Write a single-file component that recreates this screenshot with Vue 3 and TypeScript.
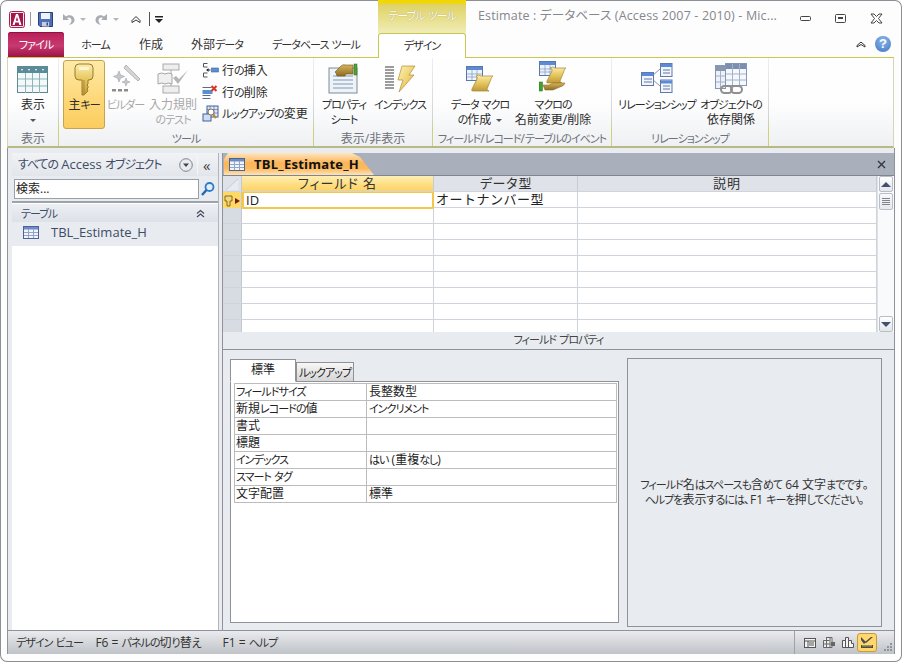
<script setup lang="ts">
import { h, type FunctionalComponent } from 'vue'

const KANA = /[\u3040-\u309f\u30a0-\u30ff]+|[^\u3040-\u309f\u30a0-\u30ff]+/g
const K: FunctionalComponent<{ t: string }> = (props) =>
  h(
    'span',
    (props.t.match(KANA) ?? []).map((run) =>
      /^[\u3040-\u309f\u30a0-\u30ff]/.test(run) ? h('span', { class: 'k' }, run) : run,
    ),
  )
K.props = ['t']

const tabs = [
  { label: 'ホーム', w: 63 },
  { label: '作成', w: 48 },
  { label: '外部データ', w: 84 },
  { label: 'データベース ツール', w: 114 },
]
const blankRows = [1, 2, 3, 4, 5, 6, 7]
const props = [
  ['フィールドサイズ', '長整数型'],
  ['新規レコードの値', 'インクリメント'],
  ['書式', ''],
  ['標題', ''],
  ['インデックス', 'はい (重複なし)'],
  ['スマート タグ', ''],
  ['文字配置', '標準'],
]
</script>

<template>
  <div class="window">
    <svg class="defs" aria-hidden="true">
      <defs>
        <linearGradient id="gold" x1="0" y1="0" x2="0" y2="1">
          <stop offset="0" stop-color="#fbeeb0" />
          <stop offset="0.5" stop-color="#e6c65e" />
          <stop offset="1" stop-color="#c09a38" />
        </linearGradient>
        <linearGradient id="bolt" x1="0" y1="0" x2="1" y2="1">
          <stop offset="0" stop-color="#fff3b0" />
          <stop offset="1" stop-color="#dcb23e" />
        </linearGradient>
        <linearGradient id="hand" x1="0" y1="0" x2="0" y2="1">
          <stop offset="0" stop-color="#d8b45a" />
          <stop offset="1" stop-color="#8e6c24" />
        </linearGradient>
      </defs>
    </svg>

    <header class="head">
      <div class="head-left">
        <div class="qat">
          <svg class="q-a" width="16" height="17" viewBox="0 0 16 17"><rect x=".5" y=".5" width="15" height="16" rx="2" fill="#fbe8ee" stroke="#a5224f" /><rect x="2" y="2" width="12" height="13" fill="#a5174c" /><path d="M3.5 14 7 3h2l3.500 11h-2.200l-.7-2.500H6.300L5.600 14zM6.800 9.800h2.400L8 5.800z" fill="#fff" /></svg>
          <i class="q-sep q-sep1"></i>
          <svg class="q-save" width="15" height="15" viewBox="0 0 15 15"><path d="M.5.500h14v14H2L.5 13z" fill="#4f6fb8" stroke="#2c3f7c" /><rect x="3" y="1" width="9" height="6" fill="#eef3fb" /><rect x="4" y="10" width="7" height="4.500" fill="#c8cedd" /><rect x="8.500" y="10.500" width="1.500" height="3" fill="#3a4a7a" /></svg>
          <svg class="q-undo" width="13" height="13" viewBox="0 0 13 13"><path d="M1 1v6h6L5 5c2-1.500 4.500 0 4.500 2.500 0 1.800-1 3-2.500 4.500 3.500-.5 5.500-2.500 5.500-5 0-4-5-6.500-8.500-3.500z" fill="#a9acb1" /></svg>
          <i class="q-arrow q-arrow1"></i>
          <svg class="q-redo" width="13" height="13" viewBox="0 0 13 13"><path d="M12 1v6H6l2-2C6 3.500 3.500 5 3.500 7.500c0 1.800 1 3 2.500 4.500C2.500 11.500.5 9.500.5 7c0-4 5-6.500 8.500-3.500z" fill="#a9acb1" /></svg>
          <i class="q-arrow q-arrow2"></i>
          <svg class="q-home" width="10" height="9" viewBox="0 0 10 9"><path d="M1 7.500 1 5.500 5 1.500 9 5.500 9 7.500 5 5z" fill="none" stroke="#333" /></svg>
          <i class="q-sep q-sep2"></i>
          <svg class="q-more" width="8" height="7" viewBox="0 0 8 7"><rect width="8" height="1.500" fill="#222" /><path d="M0 3h8L4 7z" fill="#222" /></svg>
        </div>
        <nav class="tabs">
          <div class="file-tab"><K t="ファイル" /></div>
          <div v-for="t in tabs" :key="t.label" class="tab" :style="{ width: t.w + 'px' }"><K :t="t.label" /></div>
        </nav>
      </div>
      <div class="ctx">
        <div class="ctx-top"><K t="テーブル ツール" /></div>
        <div class="ctx-tab"><K t="デザイン" /></div>
      </div>
      <div class="head-right">
        <div class="title-row">
          <span class="title">Estimate : データベース (Access 2007 - 2010)  -  Mic...</span>
          <div class="win-btns">
            <svg width="12" height="6" viewBox="0 0 12 6"><rect x=".5" y=".5" width="10" height="4" rx="1" fill="none" stroke="#444" /></svg>
            <svg width="12" height="10" viewBox="0 0 12 10"><rect x=".5" y=".5" width="10" height="8" rx="1" fill="none" stroke="#444" /><rect x="3" y="3" width="5" height="2" fill="#444" /></svg>
            <svg width="13" height="11" viewBox="0 0 13 11"><path d="M1 1h3l2.500 2.500L9 1h3L8.500 5.500 12 10H9L6.500 7.500 4 10H1L4.500 5.500z" fill="#fff" stroke="#444" /></svg>
          </div>
        </div>
        <div class="help-row">
          <svg width="10" height="7" viewBox="0 0 10 7"><path d="M1 6V4.500L5 1l4 3.500V6L5 3.500z" fill="none" stroke="#333" /></svg>
          <span class="help">?</span>
        </div>
      </div>
    </header>

    <section class="ribbon">
      <div class="group g1">
        <div class="g-body">
          <div class="big big-view">
            <div class="icon">
              <svg width="32" height="30" viewBox="0 0 32 30"><rect x=".5" y=".5" width="30" height="26" fill="#f3f8f8" stroke="#5e8a96" /><rect x="1" y="1" width="29" height="6" fill="#5a8c98" /><path d="M1 13h29M1 20h29M8.500 7v20M15.500 7v20M22.500 7v20" stroke="#8fb3bb" /><path d="M4 3h2l-1 2zM11 3h2l-1 2zM18 3h2l-1 2zM25 3h2l-1 2z" fill="#fff" /></svg>
            </div>
            <span>表示</span>
            <i class="tiny-arrow"></i>
          </div>
        </div>
        <div class="g-label">表示</div>
      </div>

      <div class="group g2">
        <div class="g-body">
          <div class="big big-key">
            <div class="icon">
              <svg width="20" height="34" viewBox="0 0 20 34"><path d="M5 1h10q4 0 4 4v8q0 4-4 4h-1v4l-1 1 1 1v2l-1 1 1 2-4 4H8V17H5q-4 0-4-4V5q0-4 4-4z" fill="url(#gold)" stroke="#9c7a2a" /><rect x="5" y="4" width="10" height="3" rx="1" fill="#fff6cc" /><path d="M10 17v15" stroke="#a9873a" /></svg>
            </div>
            <K t="主キー" />
          </div>
          <div class="big big-builder off">
            <div class="icon">
              <svg width="30" height="32" viewBox="0 0 30 32"><path d="M15 2l2 2 12 12-2 2L13 5z" fill="#d5d5d5" stroke="#b5b5b5" /><path d="M8 8l1.500 4 4 1.500-4 1.500L8 19l-1.500-4-4-1.500 4-1.500zM15 15l1 3 3 1-3 1-1 3-1-3-3-1 3-1z" fill="#c4c8cc" stroke="#9fa3a8" stroke-width=".6" /><path d="M1 26h4v2.500H1zM7 26h4v2.500H7zM13 26h4v2.500h-4z" fill="#8d8d8d" /></svg>
            </div>
            <K t="ビルダー" />
          </div>
          <div class="big big-rule off">
            <div class="icon">
              <svg width="32" height="32" viewBox="0 0 32 32"><rect x="6" y="1" width="16" height="6" fill="#eee" stroke="#aaa" /><rect x="6" y="23" width="16" height="7" fill="#eee" stroke="#aaa" /><path d="M14 7v16" stroke="#aaa" /><path d="M1 11q4-2 7 0 3-2 7 0v10q-4-2-7 0-3-2-7 0z" fill="#f0f0f0" stroke="#a5a5a5" /><path d="M16 15l5 6L31 7l-9 9-3-3z" fill="#b5b5b5" /></svg>
            </div>
            <span>入力規則</span>
            <K t="のテスト" />
          </div>
          <div class="small-list">
            <div class="small">
              <svg width="16" height="15" viewBox="0 0 16 15"><path d="M5 .5H1v3.500h4M5 10H1v4h4" fill="none" stroke="#555" /><path d="M4 7h4" stroke="#222" /><path d="M4 7l2-2v4z" fill="#222" /><rect x="9" y="5" width="7" height="4" fill="#5b8fd0" stroke="#3a66a5" stroke-width=".6" /></svg>
              <K t="行の挿入" />
            </div>
            <div class="small">
              <svg width="16" height="15" viewBox="0 0 16 15"><path d="M0 2.500h9M0 13.500h8M8 10.500H0" fill="none" stroke="#5a6d8e" /><rect y="5" width="10" height="4" fill="#5b8fd0" /><path d="M9 1l5 5m0-5L9 6" stroke="#d8361e" stroke-width="2" /></svg>
              <K t="行の削除" />
            </div>
            <div class="small">
              <svg width="17" height="17" viewBox="0 0 17 17"><rect x="5" y="1" width="11" height="11" fill="#dfe8f6" stroke="#44609a" /><path d="M8 1v11M12 1v11M5 4.500h11M5 8h11" stroke="#44609a" stroke-width=".6" /><rect x="1" y="9" width="8" height="7" fill="#cfdcf2" stroke="#44609a" /><circle cx="9" cy="7" r="3" fill="#fff" stroke="#87775a" /><path d="M11 9.500l3 3.500" stroke="#c08a30" stroke-width="2" /></svg>
              <K t="ルックアップの変更" />
            </div>
          </div>
        </div>
        <div class="g-label"><K t="ツール" /></div>
      </div>

      <div class="group g3">
        <div class="g-body">
          <div class="big big-prop">
            <div class="icon">
              <svg width="32" height="32" viewBox="0 0 32 32"><rect x="1" y="5" width="28" height="25" fill="#eef3f8" stroke="#7b8a9a" /><path d="M5 13h20M5 17h20M5 21h20M5 25h20" stroke="#7e99b8" /><path d="M7 9l6-6q2-2 5-1h7v9h-7l-1 2H9l-1-3z" fill="url(#hand)" stroke="#6e5518" stroke-width=".6" /><rect x="26" y="1" width="3" height="11" fill="#4da335" stroke="#2c6d20" stroke-width=".5" /></svg>
            </div>
            <K t="プロパティ" />
            <K t="シート" />
          </div>
          <div class="big big-index">
            <div class="icon">
              <svg width="32" height="28" viewBox="0 0 32 28"><path d="M1 2h9M1 5h9M1 8h9M1 11h9M1 14h9M1 17h9M1 20h9M1 23h9" stroke="#7c7c7c" stroke-width="1.600" /><path d="M18 1h13l-6 9h5L15 27l4-12h-5z" fill="url(#bolt)" stroke="#b18e33" stroke-width=".7" /></svg>
            </div>
            <K t="インデックス" />
          </div>
        </div>
        <div class="g-label"><K t="表示/非表示" /></div>
      </div>

      <div class="group g4">
        <div class="g-body">
          <div class="big big-macro1">
            <div class="icon">
              <svg width="28" height="28" viewBox="0 0 28 28"><rect x=".5" y=".5" width="16" height="14" fill="#eef3fb" stroke="#5a78a8" /><rect x="1" y="1" width="15" height="3" fill="#5a8ad8" /><path d="M6 4v10M11 4v10M1 8h15M1 11h15" stroke="#7e99bf" stroke-width=".7" /><path d="M10 10q3-2 5 0h12q-2 1-2 3l-4 10q0 2 2 2H7q-2 0-1-2l5-10q1-2-1-3z" fill="url(#gold)" stroke="#a48433" stroke-width=".7" /></svg>
            </div>
            <K t="データ マクロ" />
            <span><K t="の作成 " /><i class="inline-arrow"></i></span>
          </div>
          <div class="big big-macro2">
            <div class="icon icon-up">
              <svg width="28" height="32" viewBox="0 0 28 32"><rect x=".5" y=".5" width="16" height="14" fill="#eef3fb" stroke="#5a78a8" /><rect x="1" y="1" width="15" height="3" fill="#5a8ad8" /><path d="M6 4v10M11 4v10M1 8h15M1 11h15" stroke="#7e99bf" stroke-width=".7" /><path d="M11 7q3-2 5 0h11q-2 1-2 3l-4 10q0 2 2 2H9q-2 0-1-2l5-10q1-2-2-3z" fill="url(#gold)" stroke="#a48433" stroke-width=".7" /><path d="M4 24h6l4-2h12q-1 3-5 4l-7 3H6z" fill="url(#hand)" stroke="#7b6020" stroke-width=".5" /><rect x="0" y="21" width="3.500" height="9" fill="#3fa12f" stroke="#26701c" stroke-width=".5" /></svg>
            </div>
            <K t="マクロの" />
            <span>名前変更/削除</span>
          </div>
        </div>
        <div class="g-label"><K t="フィールド/レコード/テーブルのイベント" /></div>
      </div>

      <div class="group g5">
        <div class="g-body">
          <div class="big big-rel">
            <div class="icon">
              <svg width="32" height="30" viewBox="0 0 32 30"><path d="M11 13l8-7M11 16l8 7" stroke="#8a97ad" /><g fill="#f2f5fb" stroke="#6079ab"><rect x=".5" y="9.500" width="12" height="13" /><rect x="19.500" y=".5" width="11.500" height="13" /><rect x="19.500" y="17" width="11.500" height="12.500" /></g><g fill="#5a8ad8"><rect x="1" y="10" width="11" height="3" /><rect x="20" y="1" width="11" height="3" /><rect x="20" y="17.500" width="11" height="3" /></g><path d="M3 16h8M3 19h8M22 7h7M22 10h7M22 23h7M22 26h7" stroke="#6079ab" /></svg>
            </div>
            <K t="リレーションシップ" />
          </div>
          <div class="big big-dep">
            <div class="icon">
              <svg width="32" height="32" viewBox="0 0 32 32"><rect x=".5" y="2.500" width="10" height="23" fill="#edf1f8" stroke="#8596b3" /><rect x="1" y="3" width="9" height="5" fill="#8a97b0" /><rect x="10.500" y=".5" width="21" height="22" fill="#f5f8fd" stroke="#8596b3" /><rect x="11" y="1" width="20" height="5" fill="#7d8fb0" /><path d="M17.500 1v21M24.500 1v21M11 11h20M11 17h20M1 13h9M1 19h9M5.500 8v17" stroke="#a4b1c9" /><rect x="6" y="23" width="11" height="7" rx="3.500" fill="none" stroke="#8f8f8f" stroke-width="2" /><rect x="16" y="23" width="11" height="7" rx="3.500" fill="none" stroke="#8f8f8f" stroke-width="2" /></svg>
            </div>
            <K t="オブジェクトの" />
            <span>依存関係</span>
          </div>
        </div>
        <div class="g-label"><K t="リレーションシップ" /></div>
      </div>
    </section>

    <main class="body">
      <aside class="nav">
        <div class="nav-head">
          <span class="nav-title"><K t="すべての Access オブジェクト" /></span>
          <svg class="nav-drop" width="14" height="14" viewBox="0 0 14 14"><circle cx="7" cy="7" r="6.300" fill="#e9ebef" stroke="#7c8490" /><path d="M4 5.500h6L7 9z" fill="#3d4450" /></svg>
          <span class="nav-collapse">«</span>
        </div>
        <div class="search">
          <div class="search-box">検索...</div>
          <svg width="16" height="16" viewBox="0 0 16 16"><circle cx="9.500" cy="6" r="4" fill="#dfeefa" stroke="#2f7bc4" stroke-width="1.800" /><path d="M6.500 9 2 14" stroke="#2468ad" stroke-width="2.400" /></svg>
        </div>
        <div class="nav-group">
          <K t="テーブル" />
          <svg width="9" height="9" viewBox="0 0 9 9"><path d="M1 4.500 4.500 1.500 8 4.500M1 8 4.500 5 8 8" fill="none" stroke="#404a5c" stroke-width="1.200" /></svg>
        </div>
        <div class="nav-item">
          <svg width="16" height="13" viewBox="0 0 16 13"><rect x=".5" y=".5" width="15" height="12" fill="#f1f5fb" stroke="#4d6490" /><rect x="1" y="1" width="14" height="2.500" fill="#6d8bc4" /><path d="M5.500 3v9M10.500 3v9M1 6.500h14M1 9.500h14" stroke="#90a5c9" /></svg>
          <span>TBL_Estimate_H</span>
        </div>
      </aside>
      <div class="splitter"></div>
      <div class="main">
        <div class="doc-bar">
          <div class="doc-tab">
            <svg width="16" height="13" viewBox="0 0 16 13"><rect x=".5" y=".5" width="15" height="12" fill="#f1f5fb" stroke="#4d6490" /><rect x="1" y="1" width="14" height="2.500" fill="#6d8bc4" /><path d="M5.500 3v9M10.500 3v9M1 6.500h14M1 9.500h14" stroke="#90a5c9" /></svg>
            <span>TBL_Estimate_H</span>
          </div>
          <svg class="doc-x" width="9" height="9" viewBox="0 0 9 9"><path d="M1 1l7 7M8 1 1 8" stroke="#33383f" stroke-width="1.400" /></svg>
        </div>
        <div class="design">
          <div class="grid">
            <div class="row head-row">
              <div class="sel corner"><svg width="18" height="15" viewBox="0 0 18 15"><path d="M3 14 15 3v11z" fill="#e8ebf0" /><path d="M3 14 15 3" stroke="#c6ccd5" /></svg></div>
              <div class="hc active">フィールド 名</div>
              <div class="hc hc-type">データ型</div>
              <div class="hc">説明</div>
            </div>
            <div class="row">
              <div class="sel current">
                <svg width="9" height="12" viewBox="0 0 9 12"><path d="M1 1h7v5H6v5H3V6H1z" fill="#f4d67a" stroke="#86661d" /></svg>
                <i class="row-arrow"></i>
              </div>
              <div class="c field-on">ID</div>
              <div class="c c-type">オートナンバー型</div>
              <div class="c"></div>
            </div>
            <div v-for="r in blankRows" :key="r" class="row">
              <div class="sel"></div>
              <div class="c"></div>
              <div class="c"></div>
              <div class="c"></div>
            </div>
            <div class="row row-last">
              <div class="sel"></div>
              <div class="c"></div>
              <div class="c"></div>
              <div class="c"></div>
            </div>
          </div>
          <div class="vscroll">
            <div class="sb-btn"><i class="tri-up"></i></div>
            <div class="sb-thumb"><i></i><i></i><i></i><i></i></div>
            <div class="sb-track"></div>
            <div class="sb-btn"><i class="tri-down"></i></div>
          </div>
        </div>
        <div class="prop-title"><K t="フィールド プロパティ" /></div>
        <div class="prop">
          <div class="prop-left">
            <div class="prop-tabs">
              <div class="ptab on">標準</div>
              <div class="ptab"><K t="ルックアップ" /></div>
            </div>
            <div class="prop-box">
              <table class="prop-table">
                <tbody>
                  <tr v-for="p in props" :key="p[0]">
                    <td class="p-name"><K :t="p[0]" /></td>
                    <td><K :t="p[1]" /></td>
                  </tr>
                </tbody>
              </table>
            </div>
          </div>
          <div class="prop-help">
            <p><K t="フィールド名はスペースも含めて 64 文字までです。" /></p>
            <p><K t="ヘルプを表示するには、F1 キーを押してください。" /></p>
          </div>
        </div>
      </div>
    </main>

    <footer class="status">
      <K class="st-text" t="デザイン ビュー    F6 = パネルの切り替え       F1 = ヘルプ" />
      <div class="st-views">
        <svg width="12" height="10" viewBox="0 0 12 10"><rect x=".5" y=".5" width="11" height="9" fill="#f4f4f4" stroke="#555" /><path d="M1 3h10M4 3v6M5 5h5M5 7h5" stroke="#555" /></svg>
        <svg width="12" height="11" viewBox="0 0 12 11"><path d="M.5 3.500h6M.5 7h7M3.500.5v10M7 .5v10M3 .5h6v10H.5V3.500" fill="#eee" stroke="#666" /><rect x="8" y="5" width="4" height="4" fill="#666" /></svg>
        <svg width="12" height="11" viewBox="0 0 12 11"><path d="M.5 10.500v-7h3v-3h3v3h3v3h2v4z" fill="#f4f4f4" stroke="#555" /><path d="M6.500 3.500v7M3.500 3.500v7" stroke="#555" /></svg>
        <div class="st-active">
          <svg width="14" height="13" viewBox="0 0 14 13"><path d="M1 1l5 5-2 2L1 4zM13 1 6 7l-1-1 6-5z" fill="#4d4d4d" /><rect x="1" y="9" width="12" height="3" fill="#4d4d4d" /><path d="M3 9v1.500M5 9v1.500M7 9v1.500M9 9v1.500M11 9v1.500" stroke="#ffd76b" /></svg>
        </div>
      </div>
      <svg class="grip" width="10" height="10" viewBox="0 0 10 10"><path d="M7 1h2v2H7zM4 4h2v2H4zM7 4h2v2H7zM1 7h2v2H1zM4 7h2v2H4zM7 7h2v2H7z" fill="#8f949a" /></svg>
    </footer>
    <div class="frame-bottom"></div>
  </div>
</template>

<style>
html, body { margin: 0; background: #fff; }
.k { font-size: .92em; letter-spacing: -.09em; }
</style>

<style scoped>
.window {
  width: 902px;
  height: 662px;
  display: flex;
  flex-direction: column;
  background: #fdfdfd;
  border-radius: 7px;
  box-shadow: inset 0 0 0 1px #8b8f96;
  font: 12px/15px "Open Sans", "Noto Sans CJK JP", sans-serif;
  font-feature-settings: "palt";
  color: #2b2b2b;
  overflow: hidden;
}
.defs { width: 0; height: 0; display: block; }
.head { display: flex; height: 58px; margin: 0 8px 0 7px; flex: none; }
.head-left { width: 371px; border-bottom: 1px solid #c9c84e; box-sizing: border-box; }
.qat { height: 31px; display: flex; align-items: center; padding-top: 7px; box-sizing: border-box; }
.qat > * { flex: none; }
.q-a { margin-left: 2px; }
.q-sep { width: 1px; height: 14px; background: #9a9a9a; }
.q-sep1 { margin-left: 5px; }
.q-save { margin-left: 7px; }
.q-undo { margin-left: 9px; }
.q-arrow { width: 0; height: 0; border: 3px solid transparent; border-top: 3px solid #b5b5b5; border-bottom: 0; }
.q-arrow1 { margin-left: 5px; }
.q-redo { margin-left: 9px; }
.q-arrow2 { margin-left: 5px; }
.q-home { margin-left: 12px; }
.q-sep2 { margin-left: 8px; background: #555; }
.q-more { margin-left: 5px; }
.tabs { display: flex; height: 26px; align-items: flex-end; }
.file-tab {
  margin-left: 1px;
  width: 56px;
  height: 25px;
  border-radius: 3px 3px 0 0;
  background: linear-gradient(#b91e57, #c63a71 55%, #9e1146);
  box-shadow: inset 0 1px 0 #8f1240;
  color: #fff;
  text-align: center;
  line-height: 25px;
}
.tab { height: 25px; line-height: 26px; text-align: center; color: #333; white-space: pre; flex: none; }
.ctx { width: 88px; flex: none; display: flex; flex-direction: column; }
.ctx-top {
  height: 33px;
  box-sizing: border-box;
  padding-top: 8px;
  text-align: center;
  color: #fff;
  background: linear-gradient(#f3d700 0, #f3d700 3px, #dfd263 4px, #f0ecb6 100%);
  text-shadow: 0 0 1px #8f8434;
}
.ctx-tab {
  height: 25px;
  box-sizing: border-box;
  border: 1px solid #c9c84e;
  border-bottom: 0;
  border-radius: 3px 3px 0 0;
  background: #fff;
  text-align: center;
  line-height: 24px;
}
.head-right { flex: 1; border-bottom: 1px solid #c9c84e; box-sizing: border-box; display: flex; flex-direction: column; }
.title-row { display: flex; height: 32px; align-items: center; }
.title { margin-left: 12px; color: #85878c; font-size: 12.500px; white-space: pre; margin-top: -1px; letter-spacing: .15px; }
.win-btns { margin-left: auto; margin-right: 11px; display: flex; align-items: center; gap: 23px; margin-top: 5px; }
.help-row { display: flex; justify-content: flex-end; align-items: center; gap: 9px; padding-right: 3px; height: 24px; }
.help {
  width: 16px;
  height: 16px;
  border-radius: 50%;
  background: radial-gradient(circle at 50% 30%, #8ab6ea, #3f76c4);
  color: #fff;
  font: bold 13px/16px "Liberation Sans", sans-serif;
  text-align: center;
}
.ribbon {
  display: flex;
  height: 90px;
  flex: none;
  margin: 0 8px 0 7px;
  box-sizing: border-box;
  border-left: 1px solid #d5d6b8;
  border-right: 1px solid #d5d6b8;
  border-bottom: 2px solid #b9b984;
  background: linear-gradient(#fefefe 50%, #eef0f3);
}
.group {
  display: flex;
  flex-direction: column;
  box-sizing: border-box;
  border-right: 1px solid;
  border-image: linear-gradient(#f0f0f0, #d0d3d8 65%, #cfcf80 80%) 1;
}
.g1 { width: 51px; }
.g2 { width: 255px; }
.g3 { width: 119px; }
.g4 { width: 179px; }
.g5 { width: 157px; }
.g-body { flex: 1; display: flex; padding-top: 2px; min-height: 0; }
.g-label { height: 17px; text-align: center; color: #6d7178; line-height: 19px; white-space: nowrap; overflow: hidden; flex: none; }
.big { display: flex; flex-direction: column; align-items: center; box-sizing: border-box; height: 69px; white-space: pre; flex: none; }
.icon { height: 37px; flex: none; padding-top: 3px; box-sizing: border-box; display: flex; justify-content: center; align-items: flex-start; }
.icon svg { display: block; }
.icon-up svg { margin-top: -2px; }
.off { color: #a8a8a8; }
.big-view { width: 50px; }
.big-view .icon { padding-top: 6px; }
.tiny-arrow { margin-top: 7px; width: 0; height: 0; border: 3px solid transparent; border-top: 3px solid #555; border-bottom: 0; }
.g2 .g-body { padding-left: 4px; }
.big-key {
  width: 42px;
  border: 1px solid #c8a24d;
  border-radius: 3px;
  background: linear-gradient(#fdeaa8, #fdd776 60%, #fbcd5f);
}
.big-key .icon { padding-top: 2px; height: 36px; }
.big-builder { width: 41px; }
.big-rule { width: 54px; }
.small-list { margin-left: 2px; display: flex; flex-direction: column; }
.small { display: flex; align-items: center; height: 21.500px; gap: 3px; white-space: nowrap; }
.small svg { width: 17px; flex: none; }
.g3 .g-body { padding-left: 4px; }
.big-prop { width: 52px; }
.big-index { width: 56px; margin-left: 2px; }
.big-index .icon { padding-top: 5px; }
.g4 .g-body { padding-left: 13px; }
.big-macro1 { width: 68px; }
.big-macro1 .icon { padding-top: 6px; }
.big-macro2 { width: 78px; }
.inline-arrow { display: inline-block; margin-left: 2px; width: 0; height: 0; border: 3px solid transparent; border-top: 3px solid #555; border-bottom: 0; vertical-align: 2px; }
.g5 .g-body { padding-left: 5px; }
.big-rel { width: 80px; }
.big-dep { width: 68px; }

.body {
  flex: 1;
  min-height: 0;
  display: flex;
  margin: 0 7px;
  padding: 5px 0 0 4px;
  border-left: 1px solid #8f9399;
  border-right: 1px solid #8f9399;
  background: #e8ebf0;
}
.nav { width: 206px; flex: none; background: #fff; display: flex; flex-direction: column; }
.nav-head {
  height: 23px;
  flex: none;
  display: flex;
  align-items: center;
  background: linear-gradient(#f1f3f6, #e2e5ea);
  color: #3e4c66;
  font-size: 13px;
  padding-left: 6px;
}
.nav-title { white-space: pre; width: 161px; flex: none; }
.nav-drop { margin-left: 0; flex: none; }
.nav-collapse { margin-left: 4px; padding-left: 5px; border-left: 1px solid #f5f6f8; font-size: 15px; color: #444; line-height: 20px; }
.search { height: 27px; flex: none; display: flex; align-items: center; background: #e8ebf0; padding: 0 2px; gap: 1px; box-sizing: border-box; border-bottom: 2px solid #9ea3aa; }
.search-box { width: 185px; height: 20px; box-sizing: border-box; background: #fff; border: 1px solid #9aa0a8; line-height: 18px; padding-left: 1px; color: #222; }
.nav-group {
  height: 18px;
  flex: none;
  margin-top: 1px;
  display: flex;
  align-items: center;
  justify-content: space-between;
  padding: 0 13px 0 9px;
  background: linear-gradient(#eceff3 0, #dde1e8);
  color: #3e4c66;
}
.nav-item {
  height: 24px;
  flex: none;
  box-sizing: border-box;
  padding: 0 0 4px 11px;
  display: flex;
  align-items: center;
  gap: 12px;
  background: #e8ebf0;
  color: #3e4c66;
  font-size: 13px;
}
.splitter { width: 5px; flex: none; box-sizing: border-box; border-left: 1px solid #b1b5bb; border-right: 1px solid #8f9399; background: #e8ebf0; }
.main { flex: 1; min-width: 0; display: flex; flex-direction: column; }
.doc-bar {
  height: 23px;
  flex: none;
  display: flex;
  align-items: flex-end;
  justify-content: space-between;
  background: #a9b0bc;
  border-bottom: 1px solid #80868f;
  box-sizing: border-box;
}
.doc-tab {
  margin-left: 1px;
  width: 150px;
  height: 22px;
  box-sizing: border-box;
  padding-left: 5px;
  display: flex;
  align-items: center;
  gap: 9px;
  background: linear-gradient(#fde6bf, #fbb55a 45%, #fbb95f 70%, #fde4b8);
  clip-path: polygon(0 6px, 4px 0, 128px 0, 136px 4px, 150px 22px, 0 22px);
  font: bold 13px/18px "Open Sans", sans-serif;
  letter-spacing: .25px;
  color: #111;
}
.doc-x { align-self: center; margin-right: 8px; }
.design { height: 156px; flex: none; display: flex; background: #fff; }
.grid { flex: 1; min-width: 0; }
.row { display: grid; grid-template-columns: 19px 192px 144px 1fr; height: 16px; box-sizing: border-box; border-bottom: 1px solid #cfd4dc; }
.row-last { height: 12px; border-bottom: 0; }
.sel { background: #d7dbe2; border-right: 1px solid #c4c9d1; }
.corner { background: #dfe2e8; display: flex; }
.head-row { height: 16px; background: #dfe2e8; border-bottom: 1px solid #cfd4dc; }
.hc { text-align: center; line-height: 15px; color: #333; border-right: 1px solid #c7ccd4; font-size: 13px; letter-spacing: 1px; white-space: pre; }
.hc-type { letter-spacing: 0; font-feature-settings: normal; }
.hc.active { background: linear-gradient(#fdeeb4, #ffd25f); }
.current { background: #ffd966; display: flex; align-items: center; gap: 2px; padding-left: 1px; }
.row-arrow { width: 0; height: 0; border: 3.500px solid transparent; border-left: 5px solid #7c1b14; border-right: 0; }
.c { line-height: 15px; border-right: 1px solid #cfd4dc; padding-left: 2px; font-size: 13px; color: #222; white-space: nowrap; }
.c-type { font-feature-settings: normal; letter-spacing: .5px; }
.field-on { height: 17px; box-sizing: border-box; border: 2px solid #f3c848; border-top: 1px solid #f3c848; line-height: 14px; background: #fff; }
.vscroll { width: 17px; flex: none; display: flex; flex-direction: column; background: #f9fafb; border-left: 1px solid #dde1e8; box-sizing: border-box; }
.sb-btn { height: 16px; margin: 0 1px; box-sizing: border-box; border: 1px solid #b9bec6; border-radius: 2px; background: linear-gradient(#fff, #e3e6eb); display: flex; align-items: center; justify-content: center; flex: none; }
.tri-up { width: 0; height: 0; border: 5px solid transparent; border-bottom: 5px solid #44506f; border-top: 0; }
.tri-down { width: 0; height: 0; border: 5px solid transparent; border-top: 5px solid #44506f; border-bottom: 0; }
.sb-thumb { height: 17px; margin: 1px 1px 0; box-sizing: border-box; border: 1px solid #b9bec6; border-radius: 2px; background: linear-gradient(#f8f9fa, #e6e8ec); display: flex; flex-direction: column; align-items: center; justify-content: center; gap: 1px; flex: none; }
.sb-thumb i { width: 8px; height: 1px; background: #7d828b; }
.sb-track { flex: 1; }
.prop-title { height: 18px; flex: none; box-sizing: border-box; border-bottom: 1px solid #8f9399; text-align: center; line-height: 16px; color: #444; white-space: pre; }
.prop { flex: 1; min-height: 0; display: flex; padding: 8px 12px 3px 7px; gap: 8px; }
.prop-left { width: 389px; flex: none; display: flex; flex-direction: column; padding-top: 1px; padding-bottom: 4px; box-sizing: border-box; }
.prop-tabs { display: flex; height: 23px; align-items: flex-end; flex: none; position: relative; z-index: 1; margin-bottom: -1px; }
.ptab { box-sizing: border-box; width: 58px; height: 20px; border: 1px solid #8f9399; text-align: center; line-height: 19px; background: linear-gradient(#f7f7f7, #d5d5d5); color: #222; }
.ptab.on { width: 66px; height: 23px; background: #fff; border-bottom-color: #fff; line-height: 19px; }
.prop-box { flex: 1; background: #fff; border: 1px solid #8f9399; box-sizing: border-box; padding: 1px 1px 0 3px; }
.prop-table { border-collapse: collapse; width: 100%; table-layout: fixed; }
.prop-table td { height: 17px; padding: 0 0 1px 1px; border: 1px solid #bcbcbc; line-height: 15px; color: #222; white-space: pre; box-sizing: border-box; }
.prop-table .p-name { width: 132px; }
.prop-table td:last-child { padding-left: 2px; }
.prop-help { flex: 1; min-width: 0; border: 1px solid #8f9399; display: flex; flex-direction: column; justify-content: center; align-items: center; color: #333; padding-bottom: 2px; }
.prop-help p { margin: 0; line-height: 15px; white-space: pre; }
.status {
  height: 24px;
  flex: none;
  margin: 0 7px;
  box-sizing: border-box;
  display: flex;
  align-items: center;
  padding-left: 8px;
  border: 1px solid #8f9399;
  border-width: 1px 1px 0;
  background: linear-gradient(#e9ebee, #bfc2c7);
  color: #333;
}
.st-text { white-space: pre; }
.st-views { margin-left: auto; height: 100%; display: flex; align-items: center; gap: 7px; padding-left: 9px; border-left: 1px solid #9ea2a8; }
.st-active { width: 20px; height: 19px; box-sizing: border-box; border: 1px solid #c79a3b; border-radius: 3px; background: #ffd76b; display: flex; align-items: center; justify-content: center; margin-left: -4px; }
.grip { margin: 9px 1px 0 6px; }
.frame-bottom { height: 8px; flex: none; }
</style>
